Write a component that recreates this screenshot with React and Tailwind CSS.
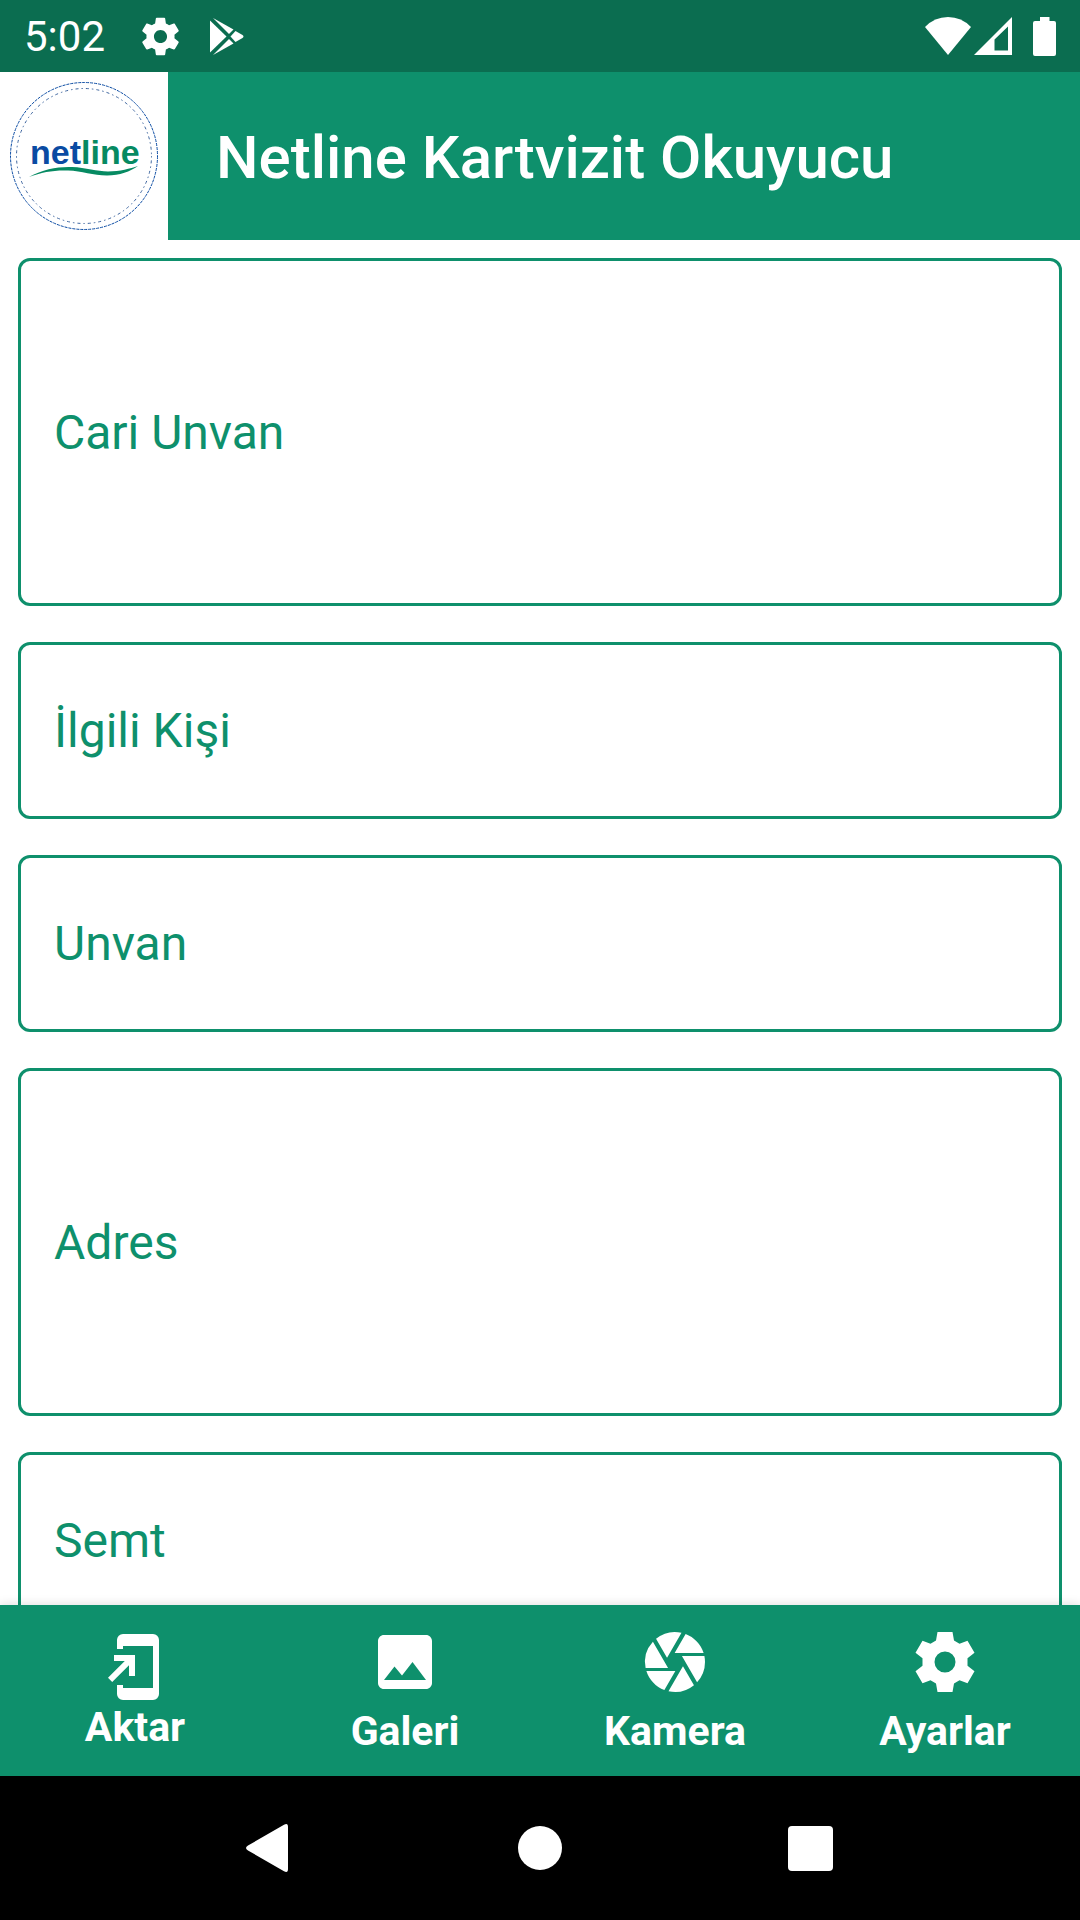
import { MdCamera, MdImage } from "react-icons/md";

const fields = [
  { id: "cari-unvan", label: "Cari Unvan", multiline: true },
  { id: "ilgili-kisi", label: "İlgili Kişi" },
  { id: "unvan", label: "Unvan" },
  { id: "adres", label: "Adres", multiline: true },
  { id: "semt", label: "Semt" },
];

function StatusGear({ className }) {
  return (
    <svg viewBox="0 0 24 24" fill="currentColor" className={className} aria-hidden="true">
      <path d="M19.43 12.98c.04-.32.07-.64.07-.98s-.03-.66-.07-.98l2.11-1.65c.19-.15.24-.42.12-.64l-2-3.46c-.12-.22-.39-.3-.61-.22l-2.49 1c-.52-.4-1.08-.73-1.69-.98l-.38-2.65C14.46 2.18 14.25 2 14 2h-4c-.25 0-.46.18-.49.42l-.38 2.65c-.61.25-1.17.59-1.69.98l-2.49-1c-.23-.09-.49 0-.61.22l-2 3.46c-.13.22-.07.49.12.64l2.11 1.65c-.04.32-.07.65-.07.98s.03.66.07.98l-2.11 1.65c-.19.15-.24.42-.12.64l2 3.46c.12.22.39.3.61.22l2.49-1c.52.4 1.08.73 1.69.98l.38 2.65c.03.24.24.42.49.42h4c.25 0 .46-.18.49-.42l.38-2.65c.61-.25 1.17-.59 1.69-.98l2.49 1c.23.09.49 0 .61-.22l2-3.46c.12-.22.07-.49-.12-.64l-2.11-1.65zM12 15.5c-1.93 0-3.5-1.57-3.5-3.5s1.57-3.5 3.5-3.5 3.5 1.57 3.5 3.5-1.57 3.5-3.5 3.5z" />
    </svg>
  );
}

function SettingsIcon({ className }) {
  return (
    <svg viewBox="-36 -36 72 72" fill="currentColor" fillRule="evenodd" className={className} aria-hidden="true">
      <path d="M-7.500-30H7.500L9-21.500 14.500-18.300 22.500-21.300 29.500-9.300 22.500-3.700V3.700L29.500 9.300 22.500 21.300 14.500 18.300 9 21.500 7.500 30H-7.500L-9 21.500-14.500 18.300-22.500 21.300-29.500 9.300-22.500 3.700V-3.700L-29.500-9.300-22.500-21.300-14.500-18.300-9-21.500ZM0-10.500A10.500 10.500 0 0 0 0 10.500 10.500 10.500 0 0 0 0-10.500Z" />
    </svg>
  );
}

function PlayStoreIcon({ className }) {
  return (
    <svg viewBox="0 0 45 45" fill="currentColor" className={className} aria-hidden="true">
      <path d="M6 6.500 22.500 22.500 6 38.500Z" />
      <path d="M9 4 29.500 15.500 25 20Z" />
      <path d="M9 41 29.500 29.500 25 25Z" />
      <path d="M31.500 17 38.500 21Q40.500 22.500 38.500 24L31.500 28 26.500 22.500Z" />
    </svg>
  );
}

function WifiIcon({ className }) {
  return (
    <svg viewBox="0 0 46 38" fill="currentColor" className={className} aria-hidden="true">
      <path d="M23 38 0 10Q9.500 0 23 0T46 10Z" />
    </svg>
  );
}

function SignalIcon({ className }) {
  return (
    <svg viewBox="0 0 38 38" fill="currentColor" fillRule="evenodd" className={className} aria-hidden="true">
      <path d="M38 0V38H0ZM34 9.500 20.500 22.500V33.500H34Z" />
    </svg>
  );
}

function BatteryIcon({ className }) {
  return (
    <svg viewBox="0 0 23 39" fill="currentColor" className={className} aria-hidden="true">
      <path d="M7 0h9.500v4H21a2 2 0 0 1 2 2v31a2 2 0 0 1-2 2H2a2 2 0 0 1-2-2V6a2 2 0 0 1 2-2h5Z" />
    </svg>
  );
}

function ExportIcon({ className }) {
  return (
    <svg viewBox="0 0 24 24" fill="currentColor" className={className} aria-hidden="true">
      <path d="M6 6V3a2 2 0 0 1 2-2h10a2 2 0 0 1 2 2v18a2 2 0 0 1-2 2H8a2 2 0 0 1-2-2v-3h2v1h10V5H8v1Z" />
      <path d="M5 8h7v7h-2v-3.600L4.400 17 3 15.600 8.600 10H5Z" />
    </svg>
  );
}

function Logo() {
  return (
    <svg viewBox="0 0 168 168" className="size-[168px] shrink-0 bg-white" role="img" aria-label="netline">
      <circle cx="84" cy="84" r="73.500" fill="none" stroke="#0a4ba3" strokeWidth="1" strokeDasharray="3 1" />
      <circle cx="84" cy="84" r="67.500" fill="none" stroke="#3d659f" strokeWidth="1" strokeDasharray="1.500 3 3 3" />
      <text x="30" y="92" fontSize="34" fontWeight="700" fontFamily="'Liberation Sans', Arial, sans-serif">
        <tspan fill="#0a4ba3">net</tspan>
        <tspan fill="#068a62">line</tspan>
      </text>
      <path
        d="M29 105C43 97 58 94.500 72 95C86 95.500 97 99.500 108 99.500C120 99.500 130 96.500 138 94C130 99.500 120 103.500 107 103.500C93 103.500 82 99 68 98.500C54 98 42 100 29 105Z"
        fill="#068a62"
      />
    </svg>
  );
}

function Field({ id, label, multiline }) {
  const look =
    "peer col-start-1 row-start-1 block w-full rounded-xl border-[3px] border-[#0e906c] bg-white px-[33px] text-5xl text-[#0e906c] focus:outline-none";
  return (
    <div className="grid shrink-0 items-center">
      {multiline ? (
        <textarea id={id} rows={1} placeholder=" " className={`${look} resize-none overflow-hidden py-[143px] leading-[56px]`} />
      ) : (
        <input id={id} type="text" placeholder=" " className={`${look} h-[177px]`} />
      )}
      <label
        htmlFor={id}
        className="invisible z-10 col-start-1 row-start-1 cursor-text px-9 text-5xl leading-[57px] text-[#0e906c] peer-placeholder-shown:visible"
      >
        {label}
      </label>
    </div>
  );
}

function Tab({ icon: Icon, label, selected }) {
  return (
    <button
      type="button"
      aria-current={selected ? "page" : undefined}
      className={`flex flex-col items-center justify-center ${selected ? "gap-0" : "gap-[9px]"}`}
    >
      <Icon className="size-[72px]" />
      <span className="text-[41px] leading-[48px] font-bold">{label}</span>
    </button>
  );
}

export default function App() {
  return (
    <div className="flex h-screen flex-col bg-white font-[Roboto,sans-serif]">
      <div className="flex h-[72px] shrink-0 items-center justify-between bg-[#0b6d50] px-6 text-white">
        <div className="flex items-center">
          <span className="pt-0.5 text-[42px] leading-[48px]">5:02</span>
          <StatusGear className="ml-[33px] size-[45px]" />
          <PlayStoreIcon className="ml-[21px] size-[45px]" />
        </div>
        <div className="flex items-center">
          <WifiIcon className="h-[38px] w-[46px]" />
          <SignalIcon className="ml-[3px] size-[38px]" />
          <BatteryIcon className="ml-[21px] h-[39px] w-[23px]" />
        </div>
      </div>

      <header className="flex shrink-0 items-center bg-[#0e906c] text-white">
        <Logo />
        <h1 className="pt-1 pl-12 text-6xl font-medium">Netline Kartvizit Okuyucu</h1>
      </header>

      <main className="flex min-h-0 flex-1 flex-col gap-9 overflow-y-auto p-[18px] [scrollbar-width:none]">
        {fields.map((f) => (
          <Field key={f.id} {...f} />
        ))}
      </main>

      <nav className="relative z-20 grid h-[171px] shrink-0 grid-cols-4 bg-[#0e906c] text-white shadow-[0_0_10px_rgba(0,0,0,0.15)]">
        <Tab icon={ExportIcon} label="Aktar" selected />
        <Tab icon={MdImage} label="Galeri" />
        <Tab icon={MdCamera} label="Kamera" />
        <Tab icon={SettingsIcon} label="Ayarlar" />
      </nav>

      <div className="relative z-20 grid h-36 shrink-0 grid-cols-3 bg-black px-[12.5%] text-white">
        <button type="button" aria-label="Geri" className="flex items-center justify-center">
          <svg viewBox="0 0 48 48" fill="currentColor" className="size-12">
            <path d="M38 .8Q42-1.500 42 3V45Q42 49.500 38 47.200L2 26.500Q-2 24 2 21.500Z" />
          </svg>
        </button>
        <button type="button" aria-label="Ana ekran" className="flex items-center justify-center">
          <span className="size-11 rounded-full bg-white" />
        </button>
        <button type="button" aria-label="Son uygulamalar" className="flex items-center justify-center">
          <span className="size-[45px] rounded bg-white" />
        </button>
      </div>
    </div>
  );
}
